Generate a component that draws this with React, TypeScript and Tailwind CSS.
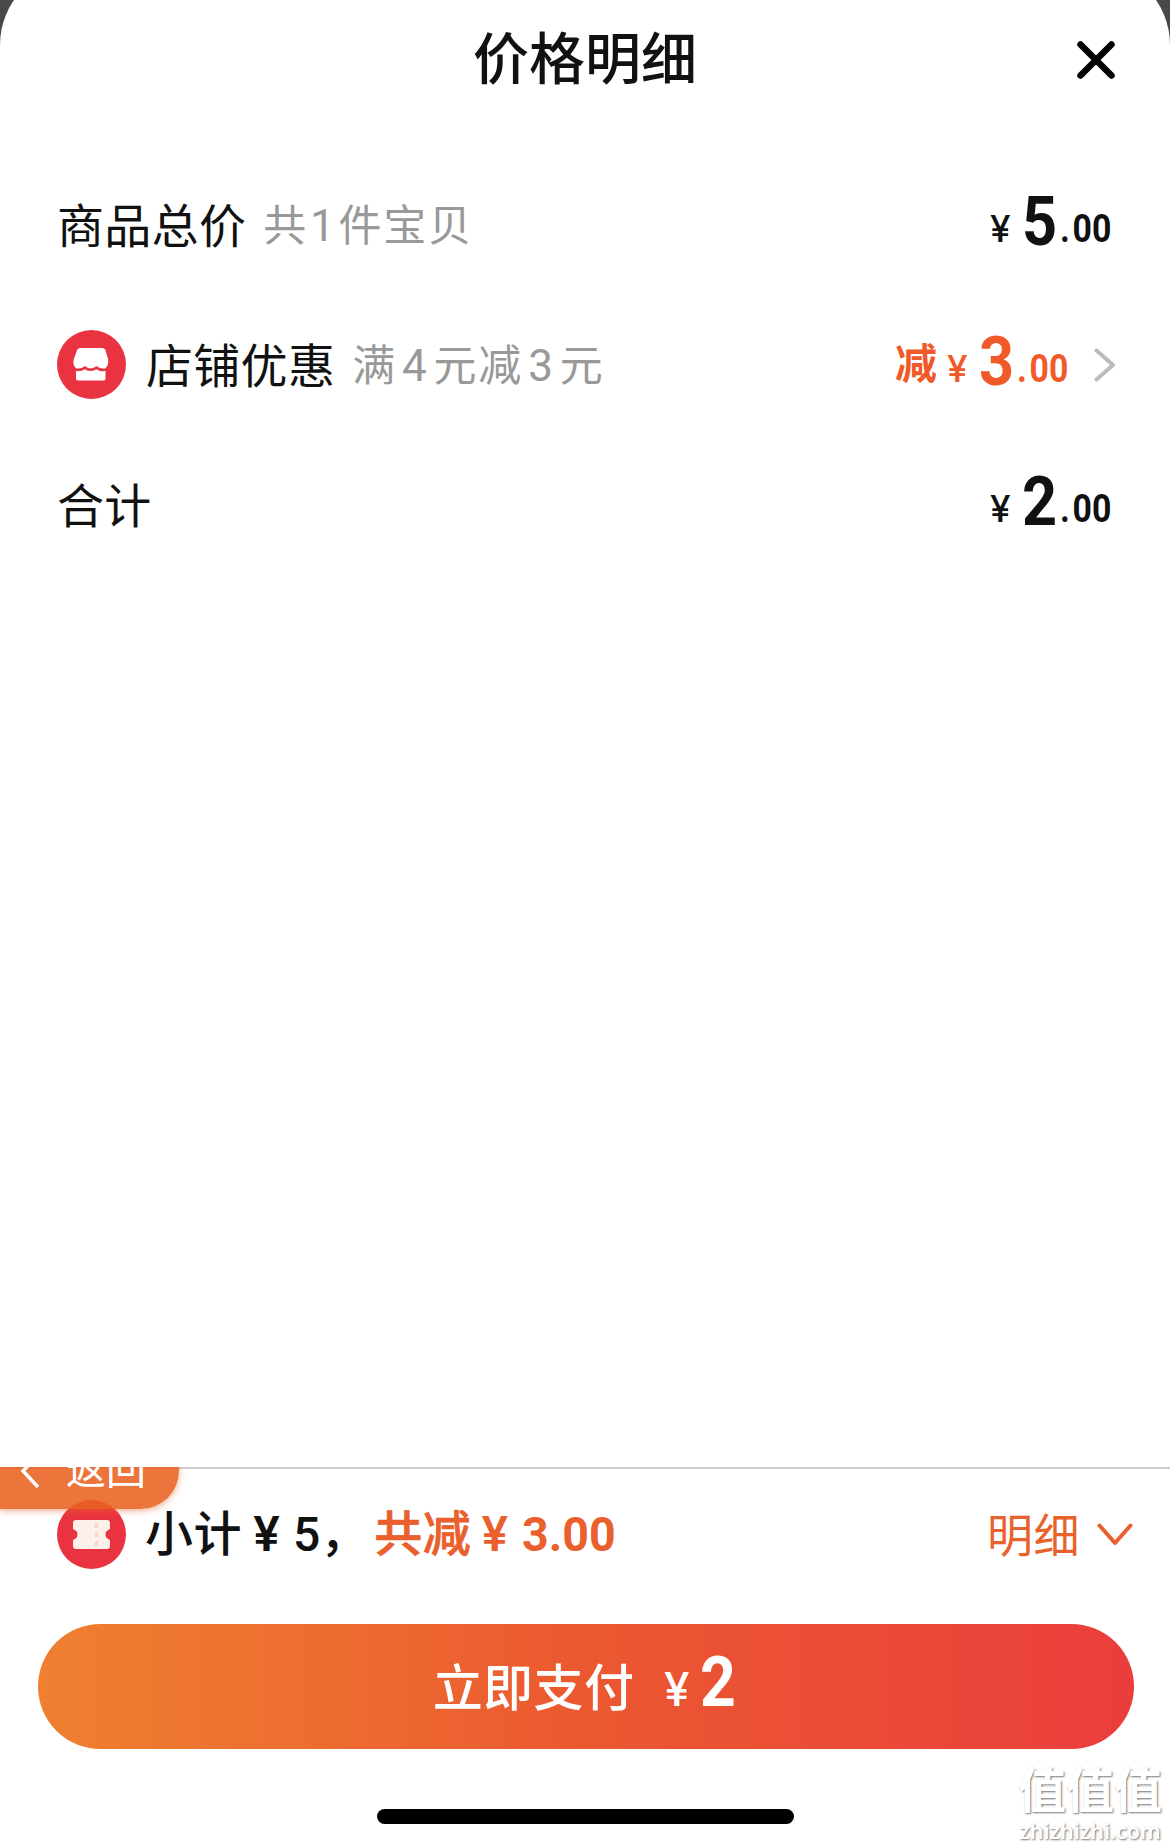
import type { ReactNode } from "react";

function StoreIcon() {
  return (
    <svg viewBox="0 0 69 69" className="h-[69px] w-[69px] shrink-0" fill="none">
      <circle cx="34.5" cy="34.5" r="34.5" fill="#ea3340" />
      <path
        d="M23.500 18h21.500c1.700 0 2.900.8 3.500 2.300l2.400 8.200c1 4-.1 8-2.400 9.500v10.500c0 1.300-.8 2-2 2H21c-1.200 0-2-.7-2-2V38c-2.300-1.500-3.200-5.500-2-9.500l3-8.200c.6-1.500 1.800-2.300 3.500-2.300z"
        fill="#fff"
      />
      <path
        d="M16.500 38.500c2.500 1.800 7.500 2.300 11.500-1 3 3 8 3 11.500 0 3.500 3.300 9 2.800 12 1"
        stroke="#ea3340"
        strokeWidth="2.600"
        strokeLinejoin="round"
      />
    </svg>
  );
}

function TicketIcon() {
  return (
    <svg viewBox="0 0 69 69" className="h-[69px] w-[69px] shrink-0">
      <circle cx="34.5" cy="34.5" r="34.5" fill="#ea3340" />
      <path
        d="M19 20h31a3 3 0 0 1 3 3v5c0 1-.4 1.500-1.200 1.800a5 5 0 0 0 0 9.400c.8.300 1.200.8 1.200 1.800v5a3 3 0 0 1-3 3H19a3 3 0 0 1-3-3v-5c0-1 .4-1.500 1.200-1.800a5 5 0 0 0 0-9.400c-.8-.3-1.200-.8-1.200-1.800v-5a3 3 0 0 1 3-3z"
        fill="#fdf0ea"
      />
      <path d="M39.500 23v5M39.500 32v5M39.500 41v5" stroke="#fad5ca" strokeWidth="3.500" />
    </svg>
  );
}

function Yen({ className = "" }: { className?: string }) {
  return <span className={`font-[Inter,sans-serif] font-medium ${className}`}>¥</span>;
}

function Price({ value, prefix }: { value: string; prefix?: string }) {
  const [whole, cents] = value.split(".");
  return (
    <div className="relative -top-[6px] flex items-baseline leading-none">
      {prefix && <span className="relative -top-[3px] mr-2.5 text-[42px] font-bold">{prefix}</span>}
      <Yen className="w-[32px] text-[37px]" />
      <span className="relative top-[3px] w-[38px] origin-left scale-x-[0.9] text-[68px] font-bold">{whole}</span>
      <span className="flex w-[50px] origin-left scale-x-[0.89] text-[38px] font-bold">
        <span className="mr-[3px]">.</span>
        {cents}
      </span>
    </div>
  );
}

function Row({ label, note, icon, children }: { label: string; note?: ReactNode; icon?: ReactNode; children: ReactNode }) {
  return (
    <div className="flex h-[140px] items-center justify-between pr-[60px] pl-[57px]">
      <div className="flex items-center">
        {icon && <div className="relative -top-px mr-[20px]">{icon}</div>}
        <span className="relative top-px text-[47px] leading-none tracking-[0.3px]">{label}</span>
        {note && <span className="relative top-px ml-[17px] text-[43px] leading-none tracking-[1.8px] text-[#999]">{note}</span>}
      </div>
      {children}
    </div>
  );
}

export default function App() {
  return (
    <div className="flex h-[1848px] w-[1170px] flex-col overflow-hidden bg-[#494949] font-[Roboto,'Noto_Sans_CJK_SC',sans-serif] text-[#111]">
      <div className="-mt-[34px] flex h-[1501px] shrink-0 flex-col rounded-t-[79px] bg-white pt-[34px]">
        <header className="grid h-[120px] grid-cols-[1fr_auto_1fr] items-center px-[55px]">
          <h1 className="col-start-2 text-[56px] leading-none font-medium">价格明细</h1>
          <svg viewBox="0 0 38 38" className="h-[38px] w-[38px] justify-self-end">
            <path d="M3.500 3.500l31 31M34.500 3.500l-31 31" stroke="#000" strokeWidth="6.500" strokeLinecap="round" />
          </svg>
        </header>
        <main className="pt-[35px]">
          <Row
            label="商品总价"
            note={
              <>
                共<span className="mx-0.5 text-[44px]">1</span>件宝贝
              </>
            }
          >
            <Price value="5.00" />
          </Row>
          <Row
            label="店铺优惠"
            icon={<StoreIcon />}
            note={
              <>
                满<span className="mx-[5px] text-[44px]">4</span>元减<span className="mx-[5px] text-[44px]">3</span>元
              </>
            }
          >
            <div className="-mr-[6px] flex items-center text-[#f05a28]">
              <Price value="3.00" prefix="减" />
              <svg viewBox="0 0 22 34" className="ml-[27px] h-[34px] w-[22px]" fill="none">
                <path d="M2.500 2.500L19 17 2.500 31.500" stroke="#bbb" strokeWidth="4" strokeLinecap="round" strokeLinejoin="round" />
              </svg>
            </div>
          </Row>
          <Row label="合计">
            <Price value="2.00" />
          </Row>
        </main>
      </div>

      <footer className="relative flex flex-1 flex-col overflow-hidden bg-white">
        <div className="h-[2px] shrink-0 bg-[#ccc]" />
        <div className="flex h-[131px] items-center pr-[37px] pl-[57px]">
          <TicketIcon />
          <div className="ml-[19px] flex items-baseline text-[48px] leading-none">
            <span className="w-[108px] font-medium tracking-[0.5px]">小计</span>
            <Yen className="w-[40px] font-semibold" />
            <span className="font-medium">5</span>
            <span className="w-[54px] font-medium">，</span>
            <span className="w-[107px] font-medium tracking-[0.5px] text-[#e95f2d] [-webkit-text-stroke:0.7px_#e95f2d]">共减</span>
            <Yen className="w-[41px] font-semibold text-[#e95f2d]" />
            <span className="origin-left scale-x-[0.97] font-bold text-[#e95f2d]">3.00</span>
          </div>
          <span className="relative top-px ml-auto text-[46px] leading-none tracking-[0.5px] text-[#e8622c]">明细</span>
          <svg viewBox="0 0 36 24" className="ml-[17px] h-[24px] w-[36px]" fill="none">
            <path d="M2.500 2.500L18 20 33.500 2.500" stroke="#e95f2d" strokeWidth="4" strokeLinecap="round" strokeLinejoin="round" />
          </svg>
        </div>
        <button className="mt-[24px] mr-[36px] ml-[38px] flex h-[125px] shrink-0 items-center justify-center rounded-full bg-linear-to-r from-[#ee8030] via-[#eb5830] to-[#ea3d3c] text-white">
          <span className="relative -top-[5px] -left-[2px] flex items-baseline leading-none">
            <span className="text-[50px] font-medium tracking-[0.4px]">立即支付</span>
            <Yen className="ml-[18px] w-[48px] pl-px text-[46px]" />
            <span className="w-[35px] origin-left scale-x-[0.88] text-[71px] font-bold">2</span>
          </span>
        </button>
        <div className="mx-auto mt-[58px] h-[15px] w-[417px] shrink-0 translate-y-0.5 rounded-full bg-black" />

        {/* back tab peeking out over the bottom bar */}
        <div className="absolute -top-[34px] left-0 flex h-[76px] w-[179px] items-center rounded-r-[38px] bg-[#e96221]/88 text-white shadow-[0_2px_6px_rgba(235,100,40,0.5)]">
          <svg viewBox="0 0 20 36" className="ml-[20px] h-[36px] w-[20px]" fill="none">
            <path d="M18 2L3 18l15 16" stroke="#fff" strokeWidth="3.500" />
          </svg>
          <span className="ml-[26px] text-[40px] leading-none">返回</span>
        </div>

        <div className="absolute right-[8px] bottom-[5px] flex flex-col items-center text-white [text-shadow:1px_1px_2px_#777]">
          <span className="mb-[3px] text-[48px] leading-none font-bold">值值值</span>
          <span className="font-['Noto_Sans',sans-serif] text-[21.5px] leading-[24px] font-semibold">zhizhizhi.com</span>
        </div>
      </footer>
    </div>
  );
}
